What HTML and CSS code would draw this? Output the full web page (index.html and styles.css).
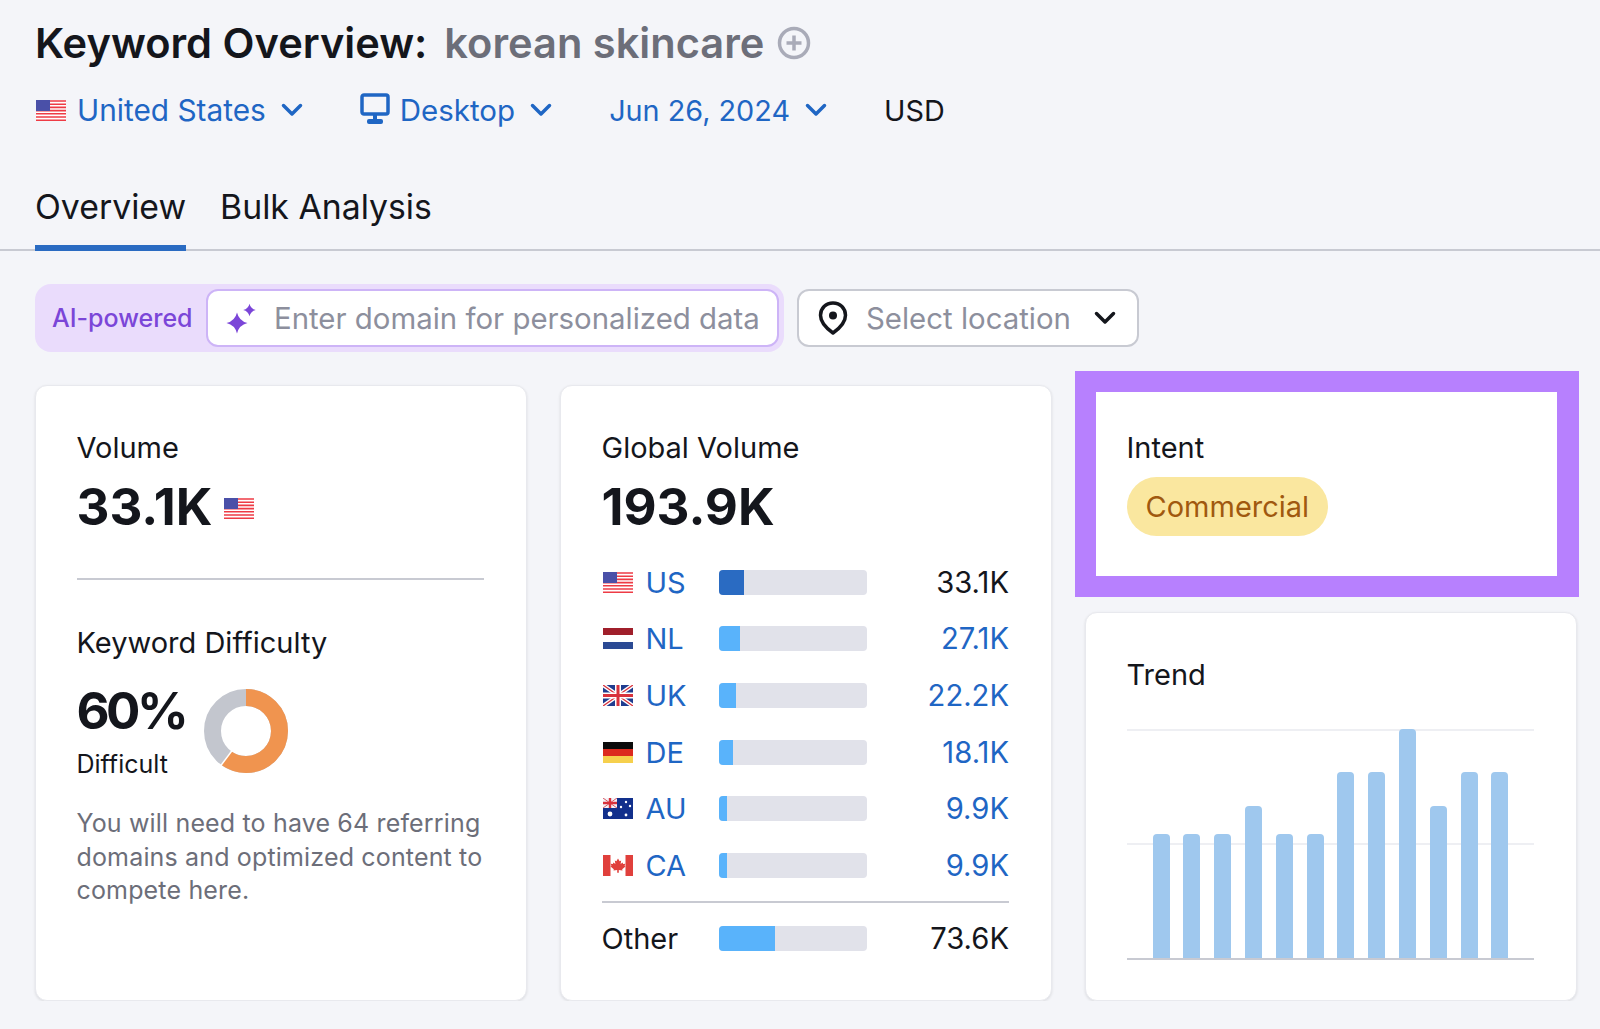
FILE: index.html
```html
<!DOCTYPE html>
<html>
    <head>
        <meta charset="UTF-8">
        <title>Keyword Overview: korean skincare</title>
        <link rel="stylesheet" href="styles.css">
    </head>

    <body>
        <!-- Flags used in the header and the country table -->
        <svg class="sprite" xmlns="http://www.w3.org/2000/svg">
            <symbol id="flag-us" viewBox="0 0 30 21">
                <rect width="30" height="21" fill="#fff"/>
                <path d="M0 1h30M0 4.2h30M0 7.4h30M0 10.6h30M0 13.8h30M0 17h30M0 20.2h30" stroke="#ee3b45" stroke-width="1.6"/>
                <rect width="14" height="11" fill="#4a50a8"/>
            </symbol>
            <symbol id="flag-nl" viewBox="0 0 30 21">
                <rect width="30" height="7" fill="#a01f2b"/>
                <rect y="7" width="30" height="7" fill="#fff"/>
                <rect y="14" width="30" height="7" fill="#2b4a94"/>
            </symbol>
            <symbol id="flag-uk" viewBox="0 0 30 21">
                <rect width="30" height="21" fill="#1f3c8f"/>
                <path d="M0 0l30 21M30 0L0 21" stroke="#fff" stroke-width="4"/>
                <path d="M0 0l30 21M30 0L0 21" stroke="#d8323c" stroke-width="1.3"/>
                <path d="M15 0v21M0 10.5h30" stroke="#fff" stroke-width="6"/>
                <path d="M15 0v21M0 10.5h30" stroke="#d8323c" stroke-width="3"/>
            </symbol>
            <symbol id="flag-de" viewBox="0 0 30 21">
                <rect width="30" height="7" fill="#0b0b0b"/>
                <rect y="7" width="30" height="7" fill="#dc2a1e"/>
                <rect y="14" width="30" height="7" fill="#f6d04d"/>
            </symbol>
            <symbol id="flag-au" viewBox="0 0 30 21">
                <rect width="30" height="21" fill="#12308c"/>
                <rect width="14" height="10" fill="#f3f3f8"/>
                <path d="M7 0v10M0 5h14" stroke="#d8323c" stroke-width="2.4"/>
                <path d="M0 0l14 10M14 0L0 10" stroke="#d8323c" stroke-width=".8"/>
                <circle cx="7" cy="16" r="2.4" fill="#fff"/>
                <circle cx="23" cy="4" r="1.2" fill="#fff"/>
                <circle cx="18" cy="9" r="1.2" fill="#fff"/>
                <circle cx="27" cy="8" r="1.2" fill="#fff"/>
                <circle cx="23" cy="17" r="1.4" fill="#fff"/>
            </symbol>
            <symbol id="flag-ca" viewBox="0 0 30 21">
                <rect width="30" height="21" fill="#fff"/>
                <rect width="7.5" height="21" fill="#e0403c"/>
                <rect x="22.5" width="7.5" height="21" fill="#e0403c"/>
                <path d="M15 3.5l1.6 2.8 1.6-.8-.6 3.6 2-1.6.5 1.5 2.2-.3-.7 2.3.9.6-3.3 2.7.3 1.3-3.7-.5v2.6h-1.6v-2.6l-3.7.5.3-1.3-3.3-2.7.9-.6-.7-2.3 2.2.3.5-1.5 2 1.6-.6-3.6 1.6.8z" fill="#e0403c"/>
            </symbol>
            <symbol id="chevron" viewBox="0 0 22 14">
                <path d="M2.5 2.5L11 11l8.5-8.5" fill="none" stroke="currentColor" stroke-width="3.5" stroke-linecap="round" stroke-linejoin="round"/>
            </symbol>
        </svg>

        <header class="page-head">
            <h1 class="title">
                Keyword Overview:
                <span class="title-keyword">korean skincare</span>
                <svg class="title-plus" viewBox="0 0 34 34">
                    <circle cx="17" cy="17" r="14.5" fill="none" stroke="#a9abb8" stroke-width="3.5"/>
                    <path d="M17 9.5v15M9.5 17h15" stroke="#a9abb8" stroke-width="3.5"/>
                </svg>
            </h1>

            <div class="filters">
                <a class="filter filter-country" href="#">
                    <svg class="flag"><use href="#flag-us"/></svg>
                    United States
                    <svg class="chevron"><use href="#chevron"/></svg>
                </a>
                <a class="filter filter-device" href="#">
                    <svg class="device-icon" viewBox="0 0 30 32">
                        <rect x="2" y="2" width="26" height="19" rx="2" fill="none" stroke="currentColor" stroke-width="3.5"/>
                        <rect x="13" y="21" width="4" height="6" fill="currentColor"/>
                        <rect x="7" y="26" width="16" height="5" rx="2" fill="currentColor"/>
                    </svg>
                    Desktop
                    <svg class="chevron"><use href="#chevron"/></svg>
                </a>
                <a class="filter filter-date" href="#">
                    Jun 26, 2024
                    <svg class="chevron"><use href="#chevron"/></svg>
                </a>
                <span class="currency">USD</span>
            </div>

            <nav class="tabs">
                <a class="tab tab-active" href="#">Overview</a>
                <a class="tab" href="#">Bulk Analysis</a>
            </nav>
        </header>

        <section class="personalize">
            <div class="ai-box">
                <span class="ai-label">AI-powered</span>
                <div class="ai-input">
                    <svg class="spark" viewBox="0 0 30 31">
                        <path d="M11 9.5Q13 18 21.5 20 13 22 11 30.5 9 22 .5 20 9 18 11 9.5z" fill="#7b46d8"/>
                        <path d="M23.5.7Q24.7 5.8 29.8 7 24.7 8.2 23.5 13.3 22.3 8.2 17.2 7 22.3 5.8 23.5.7z" fill="#7b46d8"/>
                    </svg>
                    <span class="placeholder">Enter domain for personalized data</span>
                </div>
            </div>
            <div class="location">
                <svg class="pin" viewBox="0 0 30 34">
                    <path d="M15 2C7.8 2 2.5 7.5 2.5 14.3 2.5 22 10 28.5 15 32c5-3.5 12.5-10 12.5-17.7C27.5 7.5 22.2 2 15 2z" fill="none" stroke="#14161c" stroke-width="3.5" stroke-linejoin="round"/>
                    <circle cx="15" cy="14.5" r="4" fill="#14161c"/>
                </svg>
                <span class="placeholder">Select location</span>
                <svg class="chevron chevron-dark"><use href="#chevron"/></svg>
            </div>
        </section>

        <main class="cards">
            <section class="card">
                <div class="card-label">Volume</div>
                <div class="big-value">33.1K <svg class="flag flag-value"><use href="#flag-us"/></svg></div>
                <hr class="divider divider-volume">
                <div class="card-label">Keyword Difficulty</div>
                <div class="difficulty">
                    <div>
                        <div class="big-value big-value-kd">60%</div>
                        <div class="kd-word">Difficult</div>
                    </div>
                    <svg class="donut" viewBox="0 0 84 84">
                        <circle cx="42" cy="42" r="33.5" fill="none" stroke="#c3c6ce" stroke-width="17"/>
                        <circle cx="42" cy="42" r="33.5" fill="none" stroke="#f0944f" stroke-width="17" stroke-dasharray="126.3 210.5" transform="rotate(-90 42 42)"/>
                        <path d="M16.5 77l12-16" stroke="#fff" stroke-width="1.5"/>
                    </svg>
                </div>
                <p class="kd-note">You will need to have 64 referring domains and optimized content to compete here.</p>
            </section>

            <section class="card">
                <div class="card-label">Global Volume</div>
                <div class="big-value">193.9K</div>
                <div class="countries">
                    <div class="country">
                        <a class="country-code" href="#"><svg class="flag"><use href="#flag-us"/></svg>US</a>
                        <div class="track"><div class="fill fill-top" style="width: 25px"></div></div>
                        <span class="country-value country-value-own">33.1K</span>
                    </div>
                    <div class="country">
                        <a class="country-code" href="#"><svg class="flag"><use href="#flag-nl"/></svg>NL</a>
                        <div class="track"><div class="fill" style="width: 21px"></div></div>
                        <a class="country-value" href="#">27.1K</a>
                    </div>
                    <div class="country">
                        <a class="country-code" href="#"><svg class="flag"><use href="#flag-uk"/></svg>UK</a>
                        <div class="track"><div class="fill" style="width: 17px"></div></div>
                        <a class="country-value" href="#">22.2K</a>
                    </div>
                    <div class="country">
                        <a class="country-code" href="#"><svg class="flag"><use href="#flag-de"/></svg>DE</a>
                        <div class="track"><div class="fill" style="width: 14px"></div></div>
                        <a class="country-value" href="#">18.1K</a>
                    </div>
                    <div class="country">
                        <a class="country-code" href="#"><svg class="flag"><use href="#flag-au"/></svg>AU</a>
                        <div class="track"><div class="fill" style="width: 7.5px"></div></div>
                        <a class="country-value" href="#">9.9K</a>
                    </div>
                    <div class="country">
                        <a class="country-code" href="#"><svg class="flag"><use href="#flag-ca"/></svg>CA</a>
                        <div class="track"><div class="fill" style="width: 7.5px"></div></div>
                        <a class="country-value" href="#">9.9K</a>
                    </div>
                </div>
                <hr class="divider divider-other">
                <div class="country">
                    <span class="other-label">Other</span>
                    <div class="track"><div class="fill" style="width: 56px"></div></div>
                    <span class="country-value country-value-own">73.6K</span>
                </div>
            </section>

            <div class="side">
                <section class="intent">
                    <div class="card-label">Intent</div>
                    <span class="pill">Commercial</span>
                </section>
                <section class="card card-trend">
                    <div class="card-label">Trend</div>
                    <div class="trend-chart">
                        <div class="trend-bar" style="height: 124px"></div>
                        <div class="trend-bar" style="height: 124px"></div>
                        <div class="trend-bar" style="height: 124px"></div>
                        <div class="trend-bar" style="height: 152px"></div>
                        <div class="trend-bar" style="height: 124px"></div>
                        <div class="trend-bar" style="height: 124px"></div>
                        <div class="trend-bar" style="height: 186px"></div>
                        <div class="trend-bar" style="height: 186px"></div>
                        <div class="trend-bar" style="height: 229px"></div>
                        <div class="trend-bar" style="height: 152px"></div>
                        <div class="trend-bar" style="height: 186px"></div>
                        <div class="trend-bar" style="height: 186px"></div>
                    </div>
                </section>
            </div>
        </main>
    </body>
</html>
```

FILE: styles.css
```css
body {
    margin: 0;
    background-color: #f4f5f9;
    color: #14161c;
    font-family: Inter, "Liberation Sans", sans-serif;
    font-size: 29px;
}

a {
    color: #1f66c4;
    text-decoration: none;
}

.sprite {
    display: none;
}

.flag {
    width: 30px;
    height: 21px;
    flex: none;
}

.chevron {
    width: 22px;
    height: 14px;
    flex: none;
    color: #1f66c4;
}

.chevron-dark {
    color: #14161c;
}

/* Header */
.title {
    display: flex;
    align-items: center;
    margin: 0;
    padding: 19px 0 0 35px;
    height: 48px;
    font-size: 41.6px;
    line-height: 48px;
    font-weight: 600;
    white-space: nowrap;
}

.title-keyword {
    margin-left: 17px;
    color: #6c6e79;
}

.title-plus {
    width: 34px;
    height: 34px;
    margin-left: 13px;
}

.filters {
    display: flex;
    align-items: center;
    height: 40px;
    margin-top: 23px;
    padding-left: 36px;
    font-size: 29.8px;
}

.filter {
    display: flex;
    align-items: center;
    gap: 15px;
}

.filter-country {
    gap: 11px;
}

.filter-country .chevron {
    margin-left: 4px;
}

.filter-device {
    margin-left: 57px;
    gap: 10px;
    font-size: 29.5px;
}

.filter-device .chevron {
    margin-left: 5px;
}

.filter-date {
    margin-left: 57px;
    font-size: 28.8px;
}

.device-icon {
    width: 30px;
    height: 32px;
    margin-top: -3px;
}

.currency {
    margin-left: 57px;
    font-size: 28.8px;
}

.tabs {
    display: flex;
    gap: 34px;
    margin-top: 57px;
    padding-left: 35px;
    border-bottom: 2px solid #c8cad2;
    height: 62px;
}

.tab {
    color: #14161c;
    height: 58px;
    line-height: 40px;
    font-size: 33.8px;
}

.tab-active {
    border-bottom: 6px solid #2a6bc2;
}

/* AI domain and location inputs */
.personalize {
    display: flex;
    align-items: center;
    gap: 13px;
    margin-top: 33px;
    padding-left: 35px;
}

.ai-box {
    display: flex;
    align-items: center;
    width: 749px;
    height: 68px;
    box-sizing: border-box;
    padding: 0 5px 0 17px;
    border-radius: 16px;
    background-color: #eadcfc;
}

.ai-label {
    width: 154px;
    flex: none;
    color: #7b46d8;
    font-size: 25px;
    font-weight: 500;
}

.ai-input {
    display: flex;
    align-items: center;
    flex: 1;
    height: 58px;
    box-sizing: border-box;
    padding-left: 18px;
    border: 2px solid #cdb4f7;
    border-radius: 12px;
    background-color: #fff;
}

.spark {
    width: 30px;
    height: 31px;
    margin-right: 18px;
}

.placeholder {
    color: #8d8f9d;
    font-size: 29.4px;
    white-space: nowrap;
}

.location {
    display: flex;
    align-items: center;
    width: 342px;
    height: 58px;
    box-sizing: border-box;
    padding-left: 19px;
    border: 2px solid #c8cad2;
    border-radius: 12px;
    background-color: #fff;
}

.pin {
    width: 30px;
    height: 34px;
    margin-right: 18px;
}

.location .chevron {
    margin-left: 23px;
}

/* Cards */
.cards {
    display: flex;
    align-items: flex-start;
    gap: 33px;
    margin-top: 19px;
    padding-left: 35px;
}

.card {
    width: 492px;
    height: 616px;
    box-sizing: border-box;
    margin-top: 14px;
    padding: 45px 42px 0 40.5px;
    border: 1px solid #e8e9ee;
    border-radius: 12px;
    background-color: #fff;
    box-shadow: 0 1px 3px rgba(0, 0, 0, 0.1);
}

.card-label {
    line-height: 34px;
}

.big-value {
    display: flex;
    align-items: center;
    gap: 12px;
    margin-top: 11px;
    height: 60px;
    font-size: 51px;
    font-weight: 700;
}

.flag-value {
    margin-top: 4px;
}

.divider {
    height: 2px;
    margin: 0;
    border: none;
    background-color: #c8cad2;
}

.divider-volume {
    margin: 42px 0 46px;
}

.difficulty {
    display: flex;
    align-items: center;
    gap: 19px;
    margin-top: 20px;
}

.big-value-kd {
    margin-top: 0;
    letter-spacing: -3.5px;
}

.kd-word {
    margin-top: 7px;
    font-size: 25px;
    line-height: 34px;
}

.donut {
    width: 84px;
    height: 84px;
    margin-top: 1px;
}

.kd-note {
    margin: 26px 0 0;
    color: #6c6e79;
    font-size: 25px;
    line-height: 33.5px;
    letter-spacing: 0.16px;
}

/* Global volume table */
.countries {
    margin-top: 18px;
}

.country {
    display: grid;
    grid-template-columns: 117.5px 148px 1fr;
    align-items: center;
    height: 56.6px;
}

.country-code {
    display: flex;
    align-items: center;
    gap: 13px;
}

.country-code .flag {
    margin-left: 1px;
}

.track {
    height: 25px;
    border-radius: 4px;
    overflow: hidden;
    background-color: #e1e2ea;
}

.fill {
    height: 100%;
    background-color: #59b3fb;
}

.fill-top {
    background-color: #2a6bc2;
}

.country-value {
    font-size: 29.2px;
    text-align: right;
}

.country-value-own {
    color: #14161c;
}

.divider-other {
    margin: 7px 0 8px;
}

/* Right column */
.side {
    width: 504px;
    margin-left: -10px;
}

.intent {
    height: 226px;
    box-sizing: border-box;
    padding: 39px 21px 0 30.5px;
    border-style: solid;
    border-color: #b780fe;
    border-width: 21px 22px 21px 21.5px;
    background-color: #fff;
}

.pill {
    display: inline-block;
    margin-top: 12px;
    padding: 0 19px;
    border-radius: 30px;
    background-color: #fae79f;
    color: #a0590f;
    line-height: 59px;
}

.card-trend {
    height: 389px;
    margin: 15px 0 0 10px;
}

.trend-chart {
    display: flex;
    align-items: flex-end;
    justify-content: space-between;
    height: 229px;
    margin-top: 37px;
    padding: 0 25.5px 0 26px;
    border-bottom: 2px solid #c8cad2;
    background-image:
        linear-gradient(#eeeff3, #eeeff3),
        linear-gradient(#eeeff3, #eeeff3);
    background-size: 100% 2px;
    background-position: 0 0, 0 114px;
    background-repeat: no-repeat;
}

.trend-bar {
    width: 17px;
    border-radius: 4px 4px 0 0;
    background-color: #9fc8ee;
}
```
